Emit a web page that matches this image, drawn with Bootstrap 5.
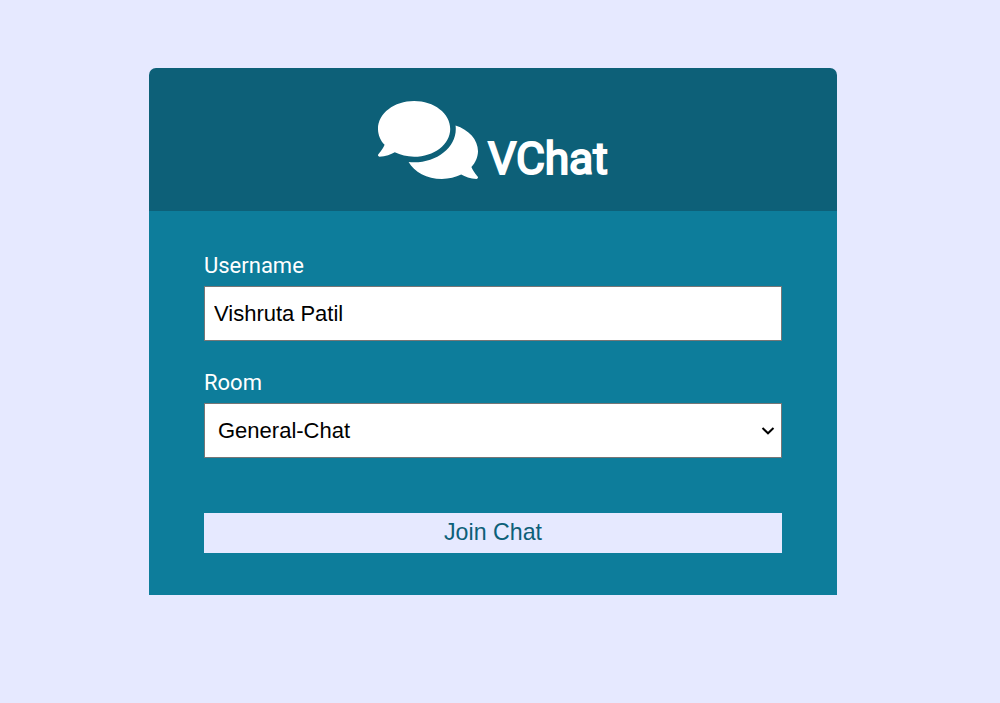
<!DOCTYPE html>
<html lang="en">
<head>
  <meta charset="UTF-8">
  <meta name="viewport" content="width=device-width, initial-scale=1.0">
  <title>VChat</title>
  <link href="https://cdn.jsdelivr.net/npm/bootstrap@5.3.0/dist/css/bootstrap.min.css" rel="stylesheet">
  <style>
    body {
      background: #e6e9ff;
      font-family: Roboto, sans-serif;
      font-size: 22px;
      line-height: 33px;
    }
    .join-container {
      width: 688px;
      margin: 68px auto 0 149px;
      color: #fff;
    }
    .join-header {
      height: 143px;
      padding: 33px 0 0 229px;
      background: #0d6078;
      border-radius: 7px 7px 0 0;
    }
    .join-header svg { width: 100px; height: 78px; }
    .join-header h1 {
      font-size: 44.5px;
      line-height: 54px;
      font-weight: 400;
      letter-spacing: -.15px;
      -webkit-text-stroke: 2px #fff;
      margin: 31px 0 0 10px;
    }
    .join-main {
      height: 384px;
      padding: 38px 55px 0;
      background: #0d7d9b;
    }
    .join-main label { margin-bottom: 4px; }
    .field-group { margin-bottom: 25px; }
    .join-main .form-control,
    .join-main .form-select {
      height: 55px;
      border: 1px solid #767676;
      color: #000;
      background-color: #fff;
      font-family: "Liberation Sans", Arial, sans-serif;
      font-size: 22px;
      padding: 0 9px;
    }
    .join-main .form-select {
      padding-left: 13px;
      background-image: url("data:image/svg+xml,%3csvg xmlns='http://www.w3.org/2000/svg' viewBox='0 0 14 8'%3e%3cpath d='M1.5 1l5.5 5.3L12.5 1' fill='none' stroke='%23000' stroke-width='2'/%3e%3c/svg%3e");
      background-size: 14px 8px;
      background-position: right 6px top 23px;
    }
    .btn-join {
      height: 40px;
      margin-top: 55px;
      padding: 0 0 2px;
      background: #e6e9ff;
      color: #0d6078;
      font-family: "Liberation Sans", Arial, sans-serif;
      font-size: 23.2px;
      line-height: 38px;
    }
  </style>
</head>
<body>
  <div class="join-container">
    <header class="join-header d-flex align-items-start">
      <svg viewBox="0 32 576 448" fill="#fff" aria-hidden="true"><path d="M416 192c0-88.400-93.100-160-208-160S0 103.600 0 192c0 34.300 14.100 65.900 38 92-13.400 30.200-35.500 54.200-35.800 54.500-2.200 2.300-2.800 5.700-1.500 8.700S4.800 352 8 352c36.600 0 66.900-12.300 88.700-25 32.200 15.700 70.300 25 111.300 25 114.900 0 208-71.600 208-160zm122 220c23.900-26 38-57.700 38-92 0-66.900-53.500-124.200-129.300-148.100.9 6.600 1.300 13.300 1.300 20.100 0 105.900-107.700 192-240 192-10.800 0-21.300-.8-31.700-1.900C207.800 439.600 281.800 480 368 480c41 0 79.100-9.200 111.300-25 21.800 12.700 52.100 25 88.700 25 3.200 0 6.100-1.900 7.300-4.800 1.300-2.900.7-6.300-1.500-8.700-.3-.3-22.400-24.200-35.800-54.500z"/></svg>
      <h1>VChat</h1>
    </header>
    <main class="join-main">
      <form>
        <div class="field-group">
          <label for="username" class="d-block">Username</label>
          <input type="text" id="username" class="form-control rounded-0" value="Vishruta Patil">
        </div>
        <div>
          <label for="room" class="d-block">Room</label>
          <select id="room" class="form-select rounded-0">
            <option>General-Chat</option>
          </select>
        </div>
        <button type="submit" class="btn btn-join w-100 border-0 rounded-0">Join Chat</button>
      </form>
    </main>
  </div>
  <script src="https://cdn.jsdelivr.net/npm/bootstrap@5.3.0/dist/js/bootstrap.bundle.min.js"></script>
</body>
</html>
